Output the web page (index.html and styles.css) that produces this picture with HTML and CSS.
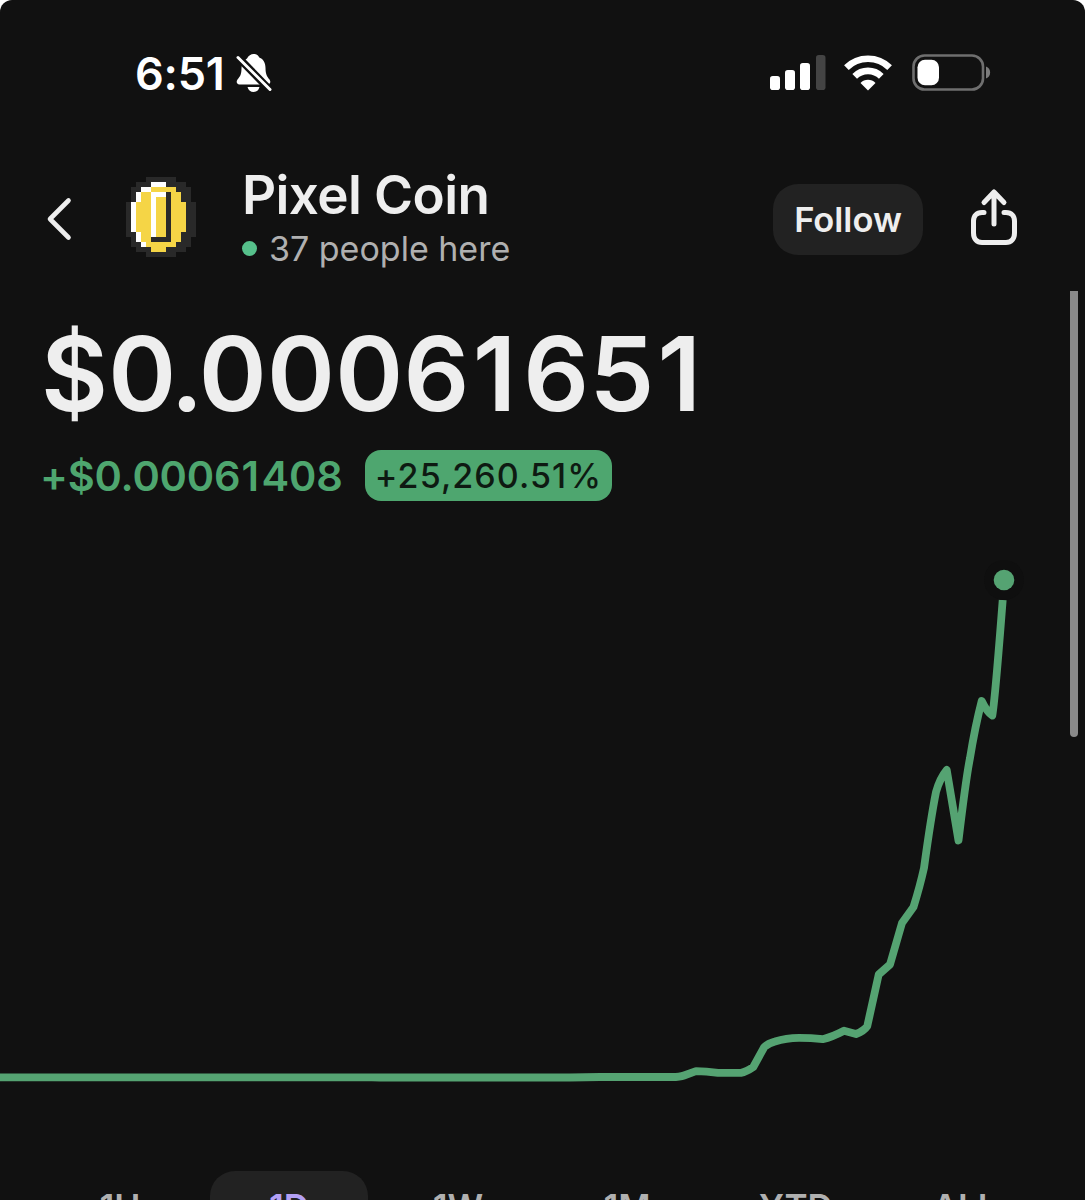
FILE: index.html
```html
<!DOCTYPE html>
<html lang="en">
<head>
<meta charset="utf-8">
<title>Pixel Coin</title>
<link rel="stylesheet" href="styles.css">
</head>
<body>
<div class="screen">
  <div class="status">
    <div class="status-left">
      <span class="clock">6:51</span>
      <svg class="bell" width="36" height="40" viewBox="0 0 36 40">
        <path fill="#fff" d="M11 4.5C12.500 1.500 15 0 17.500 0C20.500 0 22.500 1.500 23.300 3.500C27.500 5 29.500 9 29.500 14C29.500 20 31 22.500 33.500 25.500C35 27.500 34.500 30.500 31.500 30.500H3.500C.5 30.500 0 27.500 1.500 25.500C4.500 22 5.500 20 5.500 14C5.500 10 7.500 6.500 11 4.500ZM11.500 33H23.500C22.500 36.500 20.500 38 17.500 38S12.500 36.500 11.500 33Z"/>
        <path stroke="#111" stroke-width="7.500" d="M0 1L35 37"/>
        <path stroke="#fff" stroke-width="3" stroke-linecap="round" d="M2 3.500L34 35.500"/>
      </svg>
    </div>
    <div class="status-right">
      <svg width="56" height="36" viewBox="0 0 56 36">
        <g fill="#fff"><rect x="0" y="21" width="10" height="14" rx="2.800"/><rect x="15" y="15" width="10" height="20" rx="2.800"/><rect x="30" y="8" width="10" height="27" rx="2.800"/></g>
        <rect x="46" y="0" width="9.500" height="35" rx="2.800" fill="#444"/>
      </svg>
      <svg class="wifi" width="48" height="36" viewBox="0 0 48 36">
        <g fill="none" stroke="#fff" stroke-width="6.600"><path d="M2.400 12.600A30.800 30.800 0 0 1 45.600 12.600"/><path d="M10.700 21.300A18.900 18.900 0 0 1 37.300 21.300"/></g>
        <path fill="#fff" d="M24 35.500L16.500 28A10.500 10.500 0 0 1 31.500 28Z"/>
      </svg>
      <svg class="battery" width="80" height="37" viewBox="0 0 80 37">
        <rect x="1.500" y="1.500" width="69.500" height="34" rx="11" fill="none" stroke="#6f6f6f" stroke-width="2.600"/>
        <rect x="5.500" y="5.800" width="21.500" height="25.400" rx="7.500" fill="#fff"/>
        <path fill="#7c7c7c" d="M74 12.500C79.500 14 79.500 23 74 24.500Z"/>
      </svg>
    </div>
  </div>

  <header class="header">
    <svg class="back" width="26" height="44" viewBox="0 0 26 44"><path d="M22.500 3.500L4 22L22.500 40.500" fill="none" stroke="#eee" stroke-width="4.600" stroke-linecap="round" stroke-linejoin="round"/></svg>
    <svg class="coin" width="70" height="80" viewBox="0 0 14 16" shape-rendering="crispEdges">
      <path fill="#292929" d="M4 0H10V1H12V2H13V5H14V12H13V14H12V15H10V16H4V15H2V14H1V12H0V5H1V2H2V1H4Z"/>
      <path fill="#f5d546" d="M5 2H10V3H11V5H12V11H11V13H10V14H8V15H5V14H4V13H3V11H2V5H3V3H5Z"/>
      <path fill="#fff" d="M5 1H8V2H5ZM3 2H5V3H3ZM2 3H3V5H2ZM1 5H2V11H1ZM2 11H3V13H2ZM3 13H4V14H3ZM5 3H8V4H6V12H5Z"/>
      <path fill="#292929" d="M8 3H9V13H5V12H8Z"/>
    </svg>
    <div class="identity">
      <h1 class="name">Pixel Coin</h1>
      <div class="presence"><span class="online"></span><span class="people">37 people here</span></div>
    </div>
    <button class="follow"><span>Follow</span></button>
    <svg class="share" width="48" height="58" viewBox="0 0 48 58">
      <g fill="none" stroke="#eee" stroke-width="5" stroke-linecap="round" stroke-linejoin="round"><path d="M24 36V5M14 14.500L24 4L34 14.500"/><path d="M14 24.500H12C6.500 24.500 3.500 28 3.500 33V45C3.500 51 7 54.500 12 54.500H36C41 54.500 44.500 51 44.500 45V33C44.500 28 41.500 24.500 36 24.500H34"/></g>
    </svg>
  </header>

  <main class="content">
    <div class="price">$0<span class="point">.</span>0006<span class="one">1</span>65<span class="one">1</span></div>
    <div class="change"><span class="amount">+$0.0006<span class="one">1</span>408</span><span class="badge"><span>+25,260.51%</span></span></div>
    <svg class="chart" width="1085" height="560" viewBox="0 550 1085 560">
      <path fill="none" stroke="#55a372" stroke-width="7.800" stroke-linejoin="round" d="M0 1077.300H372L380 1077.500H570L600 1077H672Q680 1077 684 1075.500L696 1071.200Q706 1071.400 718 1072.800H741Q746 1072 753.300 1067L764.300 1047Q768 1043.500 775 1041.500Q786 1038 799 1037.800Q811 1037.800 822.700 1039.200Q832 1037 844 1030.700L856 1034Q864 1031 867.300 1026L878.700 974.500L890 964.500L902 923L913.500 907Q920 886 924 868Q931 817 936 792Q940 778 946.700 770L958.500 840.500Q966 778 970 758Q975 727 981.700 701Q987 712 992.300 715.500Q995 700 1002.700 600"/>
      <circle cx="1004" cy="580" r="20" fill="#0f0f0f"/>
      <circle cx="1004" cy="580" r="10.300" fill="#55a372"/>
    </svg>
    <nav class="ranges"><span class="range">1H</span><span class="range active">1D</span><span class="range">1W</span><span class="range">1M</span><span class="range">YTD</span><span class="range">ALL</span></nav>
  </main>
  <div class="scrollbar"></div>
</div>
</body>
</html>
```
FILE: styles.css
```css
* { box-sizing: border-box; }
body { margin: 0; background: #fff; color: #eee; font-family: Inter, "Liberation Sans", sans-serif; overflow: hidden; }
.screen { position: relative; width: 1085px; height: 1200px; overflow: hidden; background: #111; border-radius: 12px 12px 0 0; display: flex; flex-direction: column; }
svg { display: block; flex: none; }
span, h1 { white-space: nowrap; }
.status { height: 160px; flex: none; display: flex; justify-content: space-between; padding: 54px 93px 0 135px; }
.status-left { display: flex; }
.clock { width: 101px; color: #fff; font-size: 45px; font-weight: 600; line-height: 40px; letter-spacing: -0.2px; }
.status-right { display: flex; padding-top: 1px; }
.wifi { margin-left: 18px; }
.battery { margin-left: 20px; margin-top: -1px; }
.header { height: 130px; flex: none; display: flex; align-items: flex-start; padding-left: 46px; }
.back { margin-top: 37px; }
.coin { margin: 17px 0 0 54px; }
.identity { width: 531px; margin-left: 46px; padding-top: 8px; }
.name { margin: 0; font-size: 53px; font-weight: 600; line-height: 54px; letter-spacing: -0.6px; }
.presence { display: flex; align-items: center; height: 53px; font-size: 34px; color: #b0b0b0; }
.online { width: 15px; height: 15px; border-radius: 50%; background: #56c08b; margin-right: 12px; }
.follow { width: 150px; height: 71px; margin: 24px 0 0; padding: 0; border: 0; border-radius: 25px; background: #222; color: #eee; font: 600 34.500px/71px Inter, sans-serif; }
.share { margin: 28px 0 0 47px; }
.content { display: flex; flex-direction: column; }
.price { height: 152px; padding-left: 41px; font-size: 103px; font-weight: 600; line-height: 167px; letter-spacing: 0.3px; }
.point { margin: 0 -5px 0 -6px; }
.one { margin: 0 0.065em 0 0.03em; }
.change { display: flex; align-items: center; height: 66px; padding-left: 40px; }
.amount { width: 325px; padding-top: 1px; font-size: 41.500px; font-weight: 600; color: #4ea66f; letter-spacing: -0.2px; }
.badge { width: 247px; height: 51px; border-radius: 16px; background: #4ea66f; color: #0e1a12; font-size: 34px; font-weight: 500; line-height: 51px; text-align: center; letter-spacing: 1.1px; }
.chart { margin-top: 42px; }
.ranges { display: grid; grid-template-columns: repeat(6, 158px); gap: 11px; padding-left: 41px; margin-top: 61px; }
.range { height: 71px; border-radius: 25px; font-size: 35px; font-weight: 600; line-height: 72px; text-align: center; color: #b0b0b0; }
.active { background: #222; color: #b3a0f5; }
.scrollbar { position: absolute; left: 1070px; top: 291px; width: 8px; height: 446px; background: #8a8a8a; border-radius: 0 0 4px 4px; }
```
